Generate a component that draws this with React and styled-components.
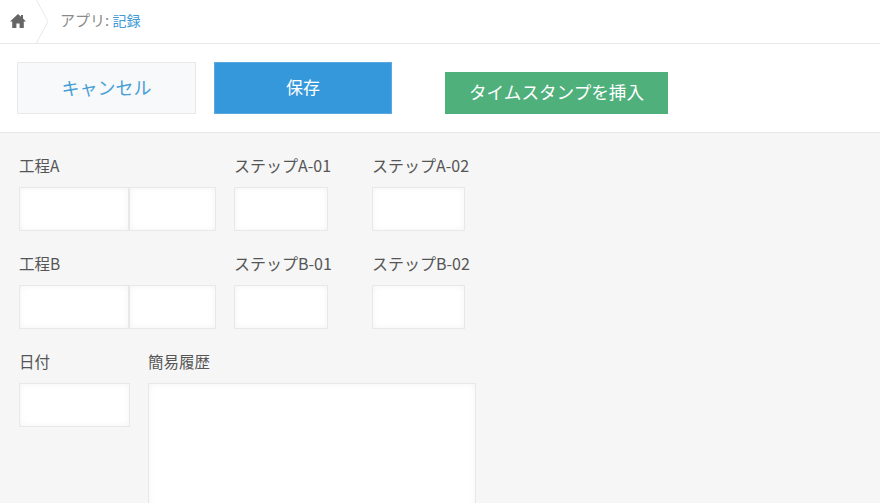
import React from "react";
import styled, { createGlobalStyle } from "styled-components";

const GlobalStyle = createGlobalStyle`
  html, body {
    margin: 0;
    height: 100%;
    overflow: hidden;
    background: #f6f6f6;
  }
  body {
    font-family: "Noto Sans CJK JP", "Liberation Sans", sans-serif;
    color: #555;
  }
`;

const Page = styled.div`
  height: 503px;
  overflow: hidden;
  display: flex;
  flex-direction: column;
`;

const Breadcrumb = styled.nav`
  height: 44px;
  box-sizing: border-box;
  flex: none;
  display: flex;
  align-items: center;
  background: #fff;
  border-bottom: 1px solid #e6e8e9;
`;

const HomeLink = styled.a`
  width: 36px;
  height: 43px;
  flex: none;
  display: flex;
  align-items: center;
  justify-content: center;
  padding: 0 1px 2px 0;
  box-sizing: border-box;
`;

const Chevron = styled.svg`
  width: 13px;
  height: 43px;
  flex: none;
`;

const Crumbs = styled.div`
  margin-left: 11px;
  padding-bottom: 5px;
  font-size: 15px;
  line-height: 1;
  color: #8a8a8a;
  white-space: nowrap;
`;

const CrumbLink = styled.a`
  color: #3f9bd6;
  font-size: 14px;
`;

const Toolbar = styled.div`
  height: 89px;
  flex: none;
  box-sizing: border-box;
  display: flex;
  align-items: flex-start;
  padding: 18px 0 0 17px;
  background: #fff;
  border-bottom: 1px solid #e6e8e9;
`;

const ActionButton = styled.button`
  width: ${(p) => p.$width}px;
  height: 52px;
  margin-left: ${(p) => p.$gap || 0}px;
  padding: 0 0 ${(p) => p.$lift}px;
  box-sizing: border-box;
  font-family: inherit;
  font-size: ${(p) => p.$size}px;
  color: ${(p) => p.$color};
  background: ${(p) => p.$bg};
  border: 1px solid ${(p) => p.$border};
`;

const StampButton = styled.button`
  width: 223px;
  height: 42px;
  margin: 10px 0 0 53px;
  padding: 0 0 3px;
  font-family: inherit;
  font-size: 17.6px;
  color: #fff;
  background: #4fb07c;
  border: 0;
`;

const Form = styled.div`
  flex: 1;
  padding: 21px 0 0 19px;
  display: flex;
  flex-direction: column;
  gap: 21px;
  background: #f6f6f6;
`;

const Row = styled.div`
  display: flex;
  gap: 18px;
`;

const Field = styled.div`
  width: ${(p) => p.$width}px;
  flex: none;
`;

const Label = styled.div`
  height: 22px;
  line-height: 22px;
  margin-bottom: 11px;
  font-size: ${(p) => p.$size || 15.5}px;
  color: #555;
  white-space: nowrap;
`;

const InputGroup = styled.div`
  display: flex;
`;

const Input = styled.div`
  width: ${(p) => p.$width}px;
  height: 44px;
  flex: none;
  box-sizing: border-box;
  background: #fff;
  border: 1px solid #e6e8e9;
  box-shadow: inset 0 0 6px rgba(0, 0, 0, 0.05);
`;

const TextArea = styled(Input)`
  height: 160px;
`;

const HomeIcon = () => (
  <svg width="16" height="16" viewBox="0 0 16 16">
    <path
      fill="#666"
      d="M8 1 L11 3.8 V2 H13 V5.6 L16 8.4 H13.8 V15 H9.6 V10.4 H6.4 V15 H2.2 V8.4 H0 Z"
    />
  </svg>
);

const fieldRows = [
  { main: "工程A", first: "ステップA-01", second: "ステップA-02" },
  { main: "工程B", first: "ステップB-01", second: "ステップB-02" },
];

export default function App() {
  return (
    <Page>
      <GlobalStyle />
      <Breadcrumb>
        <HomeLink>
          <HomeIcon />
        </HomeLink>
        <Chevron viewBox="0 0 13 43">
          <path d="M0.5 0 L12 21.5 L0.5 43" fill="none" stroke="#e6e8e9" />
        </Chevron>
        <Crumbs>
          アプリ: <CrumbLink>記録</CrumbLink>
        </Crumbs>
      </Breadcrumb>
      <Toolbar>
        <ActionButton $width={179} $size={18} $lift={3} $color="#4a9fd6" $bg="#f7f9fa" $border="#e6e8e9">
          キャンセル
        </ActionButton>
        <ActionButton $width={178} $gap={18} $size={17} $lift={4} $color="#fff" $bg="#3498db" $border="#5aa9e0">
          保存
        </ActionButton>
        <StampButton>タイムスタンプを挿入</StampButton>
      </Toolbar>
      <Form>
        {fieldRows.map((row) => (
          <Row key={row.main}>
            <Field $width={197}>
              <Label>{row.main}</Label>
              <InputGroup>
                <Input $width={110} />
                <Input $width={87} />
              </InputGroup>
            </Field>
            <Field $width={120}>
              <Label $size={16}>{row.first}</Label>
              <Input $width={94} />
            </Field>
            <Field $width={94}>
              <Label $size={16}>{row.second}</Label>
              <Input $width={93} />
            </Field>
          </Row>
        ))}
        <Row>
          <Field $width={111}>
            <Label>日付</Label>
            <Input $width={111} />
          </Field>
          <Field $width={328}>
            <Label>簡易履歴</Label>
            <TextArea $width={328} />
          </Field>
        </Row>
      </Form>
    </Page>
  );
}
